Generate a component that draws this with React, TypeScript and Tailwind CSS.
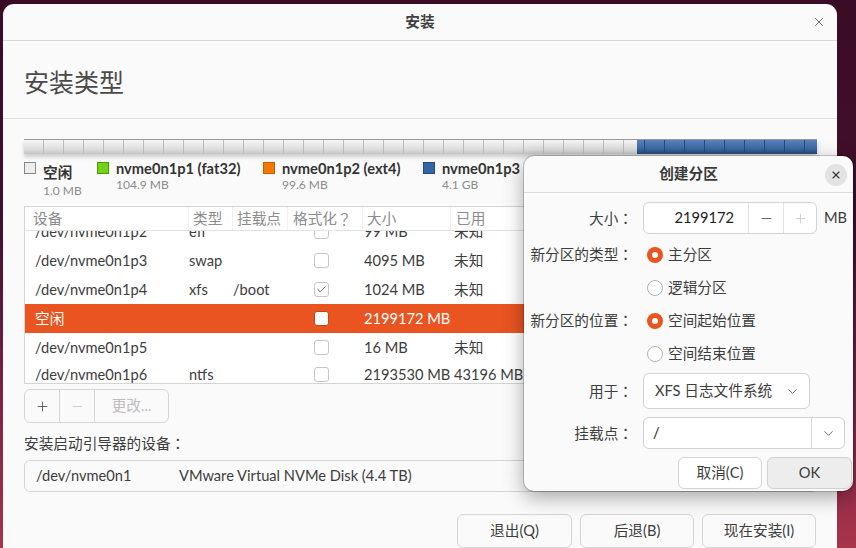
import { Check, ChevronDown, Minus, Plus, X } from "lucide-react";

type Row = {
  dev: string;
  type: string;
  mount: string;
  fmt: boolean;
  size: string;
  used: string;
  selected?: boolean;
  h: string;
};

const rows: Row[] = [
  { dev: "/dev/nvme0n1p2", type: "efi", mount: "", fmt: false, size: "99 MB", used: "未知", h: "h-[29px]" },
  { dev: "/dev/nvme0n1p3", type: "swap", mount: "", fmt: false, size: "4095 MB", used: "未知", h: "h-[29px]" },
  { dev: "/dev/nvme0n1p4", type: "xfs", mount: "/boot", fmt: true, size: "1024 MB", used: "未知", h: "h-[29px]" },
  { dev: "空闲", type: "", mount: "", fmt: false, size: "2199172 MB", used: "", selected: true, h: "h-[29px]" },
  { dev: "/dev/nvme0n1p5", type: "", mount: "", fmt: false, size: "16 MB", used: "未知", h: "h-[29px]" },
  { dev: "/dev/nvme0n1p6", type: "ntfs", mount: "", fmt: false, size: "2193530 MB", used: "43196 MB", h: "h-[25px]" },
];

const legend = [
  { name: "空闲", size: "1.0 MB", color: "bg-[#ededed] border-[#8a8a8a]", w: "w-[73px]", free: true },
  { name: "nvme0n1p1 (fat32)", size: "104.9 MB", color: "bg-[#73d216] border-[#4e9a06]", w: "w-[166px]" },
  { name: "nvme0n1p2 (ext4)", size: "99.6 MB", color: "bg-[#f57900] border-[#ce5c00]", w: "w-[160px]" },
  { name: "nvme0n1p3", size: "4.1 GB", color: "bg-[#3465a4] border-[#204a87]", w: "w-[120px]" },
];

// full-width punctuation, centred in its cell like the reference
function Punct({ ch }: { ch: string }) {
  return <span className="font-['Noto_Sans_CJK_JP',sans-serif]">{ch}</span>;
}

function Label({ text }: { text?: string }) {
  return (
    <div className="w-[119px] pr-[10px] text-right whitespace-nowrap">
      {text && (
        <>
          {text}
          <Punct ch="：" />
        </>
      )}
    </div>
  );
}

function Radio({ checked }: { checked?: boolean }) {
  if (checked) {
    return (
      <span className="w-4 h-4 rounded-full bg-[#e95420] flex items-center justify-center">
        <span className="w-[6px] h-[6px] rounded-full bg-white" />
      </span>
    );
  }
  return <span className="w-4 h-4 rounded-full bg-white border border-[#b4b4b4]" />;
}

function PartitionTable() {
  return (
    <div className="w-[793px] h-[178px] border border-[#d4d4d4] bg-white mt-[10px] flex flex-col">
      <div className="flex h-[24px] shrink-0 border-b border-[#e2e2e2] text-[#8c8c8c] items-center whitespace-nowrap">
        <div className="w-[163px] pl-2">设备</div>
        <div className="w-[44px] pl-[4px] h-full flex items-center border-l border-[#f0f0f0]">类型</div>
        <div className="w-[55px] pl-[4px] h-full flex items-center border-l border-[#f0f0f0]">挂载点</div>
        <div className="w-[75px] pl-[5px] h-full flex items-center border-l border-[#f0f0f0]">
          格式化<Punct ch="？" />
        </div>
        <div className="w-[88px] pl-[4px] h-full flex items-center border-l border-[#f0f0f0]">大小</div>
        <div className="flex-1 pl-[5px] h-full flex items-center border-l border-[#f0f0f0]">已用</div>
      </div>
      <div className="h-[152px] overflow-hidden">
        <div className="-mt-[14px]">
          {rows.map((r) => (
            <div
              key={r.dev}
              className={`flex items-center whitespace-nowrap ${r.h} ${r.selected ? "bg-[#e95420] text-white" : ""}`}
            >
              <div className="w-[163px] pl-[10px]">{r.dev}</div>
              <div className="w-[44px] pl-px">{r.type}</div>
              <div className="w-[55px] pl-px">{r.mount}</div>
              <div className="w-[75px] pl-[27px]">
                <span
                  className={`w-[15px] h-[15px] rounded-[3px] bg-white border flex items-center justify-center ${
                    r.selected ? "border-[#c44518]" : "border-[#c6c6c6]"
                  }`}
                >
                  {r.fmt && <Check size={11} strokeWidth={2} className="text-[#555]" />}
                </span>
              </div>
              <div className="w-[88px] pl-[2px]">{r.size}</div>
              <div className="flex-1 pl-[4px]">{r.used}</div>
            </div>
          ))}
        </div>
      </div>
    </div>
  );
}

function CreateDialog() {
  return (
    <div className="absolute left-[524px] top-[156px] w-[329px] h-[335px] rounded-[10px] bg-[#fafafa] shadow-[0_0_0_1px_rgba(0,0,0,0.18),0_6px_20px_rgba(0,0,0,0.35)] flex flex-col">
      <div className="relative h-[37px] shrink-0 border-b border-[#dadada] flex items-center justify-center">
        <span className="font-bold text-[#3a3a3a]">创建分区</span>
        <span className="absolute right-[6px] top-[8px] w-[22px] h-[22px] rounded-full bg-[#e3e3e3] flex items-center justify-center">
          <X size={12} strokeWidth={2.2} className="text-[#333]" />
        </span>
      </div>

      <div className="flex flex-col pt-[9px]">
        <div className="flex items-center h-[32px]">
          <Label text="大小" />
          <div className="flex w-[174px] h-full rounded-[6px] border border-[#d2d2d2] bg-white overflow-hidden">
            <div className="w-[104px] pr-[14px] flex items-center justify-end text-[#222]">2199172</div>
            <div className="w-[35px] border-l border-[#e2e2e2] flex items-center justify-center">
              <Minus size={15} strokeWidth={1.3} className="text-[#444]" />
            </div>
            <div className="flex-1 border-l border-[#e2e2e2] flex items-center justify-center">
              <Plus size={15} strokeWidth={1.3} className="text-[#c8c8c8]" />
            </div>
          </div>
          <span className="ml-[7px]">MB</span>
        </div>

        <div className="flex items-center h-[33px] mt-[4px]">
          <Label text="新分区的类型" />
          <div className="flex items-center gap-[5px] pl-[4px]">
            <Radio checked />
            <span>主分区</span>
          </div>
        </div>
        <div className="flex items-center h-[33px]">
          <Label />
          <div className="flex items-center gap-[5px] pl-[4px]">
            <Radio />
            <span>逻辑分区</span>
          </div>
        </div>
        <div className="flex items-center h-[33px]">
          <Label text="新分区的位置" />
          <div className="flex items-center gap-[5px] pl-[4px]">
            <Radio checked />
            <span>空间起始位置</span>
          </div>
        </div>
        <div className="flex items-center h-[33px]">
          <Label />
          <div className="flex items-center gap-[5px] pl-[4px]">
            <Radio />
            <span>空间结束位置</span>
          </div>
        </div>

        <div className="flex items-center h-[36px] mt-[3px]">
          <Label text="用于" />
          <div className="w-[167px] h-full rounded-[6px] border border-[#d2d2d2] bg-white flex items-center justify-between pl-[11px] pr-[9px]">
            <span>XFS 日志文件系统</span>
            <ChevronDown size={15} strokeWidth={1.4} className="text-[#555]" />
          </div>
        </div>

        <div className="flex items-center h-[32px] mt-[8px]">
          <Label text="挂载点" />
          <div className="w-[202px] h-full rounded-[6px] border border-[#d2d2d2] bg-white flex">
            <div className="w-[167px] pl-[9px] flex items-center text-[#222]">/</div>
            <div className="flex-1 border-l border-[#d8d8d8] flex items-center justify-center">
              <ChevronDown size={15} strokeWidth={1.4} className="text-[#555]" />
            </div>
          </div>
        </div>

        <div className="flex justify-end gap-[5px] pr-px mt-[8px]">
          <div className="w-[84px] h-[32px] rounded-[6px] border border-[#d4d4d4] bg-white flex items-center justify-center">
            取消(C)
          </div>
          <div className="w-[85px] h-[32px] rounded-[6px] border border-[#d0d0d0] bg-[#ededed] flex items-center justify-center">
            OK
          </div>
        </div>
      </div>
    </div>
  );
}

export default function App() {
  return (
    <div className="relative w-[856px] h-[548px] overflow-hidden pl-[3px] pt-1 bg-[linear-gradient(180deg,#3a0c26_0%,#430f2a_40%,#86264a_78%,#a8344a_100%)] font-['Lato','Noto_Sans_CJK_SC',sans-serif] text-[14.67px] text-[#3d3d3d]">
      <div className="w-[834px] h-[560px] bg-[#fafafa] rounded-t-[11px] flex flex-col">
        {/* title bar */}
        <div className="relative h-[37px] shrink-0 border-b border-[#d8d8d8] flex items-center justify-center">
          <span className="font-semibold text-[#404040]">安装</span>
          <X size={14} strokeWidth={1.5} className="absolute right-[11px] top-[11px] text-[#555]" />
        </div>

        {/* heading */}
        <div className="h-[78px] shrink-0 border-b border-[#e0e0e0] flex items-center pl-[21px] pt-[6px]">
          <h1 className="text-[25px] text-[#4a4a4a]">安装类型</h1>
        </div>

        <div className="flex flex-col pl-[21px] pt-[20px]">
          {/* disk usage bar */}
          <div className="flex w-[793px] h-[15px] border-t border-[#9a9a9a] shadow-[0_3px_4px_rgba(0,0,0,0.18)]">
            <div className="w-[613px] h-full bg-[repeating-linear-gradient(90deg,transparent_0px,transparent_19px,#bcbcbc_19px,#bcbcbc_20px),linear-gradient(180deg,#f6f6f6,#dcdcdc_70%,#c4c4c4)]" />
            <div className="flex-1 h-full bg-[repeating-linear-gradient(90deg,transparent_0px,transparent_7px,#2a4a7a_7px,#2a4a7a_8px,transparent_8px,transparent_20px),linear-gradient(180deg,#5a82bb,#3d6aa6_60%,#27497a)]" />
          </div>

          {/* legend */}
          <div className="flex mt-[6px] h-[36px] items-start">
            {legend.map((l) => (
              <div key={l.name} className={`flex gap-[7px] ${l.w}`}>
                <span className={`w-3 h-3 mt-[2px] border shrink-0 ${l.color}`} />
                <div className={`flex flex-col ${l.free ? "pt-[4px]" : ""}`}>
                  <span className="font-bold leading-[18px] whitespace-nowrap text-[#333]">{l.name}</span>
                  <span className={`text-[12px] leading-[14px] text-[#8a8a8a] ${l.free ? "mt-[2px]" : ""}`}>{l.size}</span>
                </div>
              </div>
            ))}
          </div>

          <PartitionTable />

          {/* add / remove / change */}
          <div className="flex mt-[5px] h-[34px] w-[145px] rounded-[6px] border border-[#d6d6d6] bg-[#fafafa]">
            <div className="w-[35px] flex items-center justify-center border-r border-[#d6d6d6]">
              <Plus size={15} strokeWidth={1.3} className="text-[#444]" />
            </div>
            <div className="w-[35px] flex items-center justify-center border-r border-[#d6d6d6]">
              <Minus size={15} strokeWidth={1.3} className="text-[#c4c4c4]" />
            </div>
            <div className="flex-1 flex items-center justify-center text-[#bdbdbd]">更改...</div>
          </div>

          <div className="mt-[9px] h-[21px] leading-[21px]">
            安装启动引导器的设备<Punct ch="：" />
          </div>

          <div className="mt-[7px] h-[32px] w-[793px] rounded-[6px] border border-[#d6d6d6] bg-[#fafafa] flex items-center pl-[11px]">
            <span className="w-[143px]">/dev/nvme0n1</span>
            <span>VMware Virtual NVMe Disk (4.4 TB)</span>
          </div>

          <div className="mt-[22px] w-[793px] flex justify-end gap-2 pr-px">
            <div className="w-[115px] h-[34px] rounded-[6px] border border-[#d4d4d4] bg-[#fafafa] flex items-center justify-center">退出(Q)</div>
            <div className="w-[114px] h-[34px] rounded-[6px] border border-[#d4d4d4] bg-[#fafafa] flex items-center justify-center">后退(B)</div>
            <div className="w-[114px] h-[34px] rounded-[6px] border border-[#d4d4d4] bg-[#fafafa] flex items-center justify-center">现在安装(I)</div>
          </div>
        </div>
      </div>

      <CreateDialog />
    </div>
  );
}
